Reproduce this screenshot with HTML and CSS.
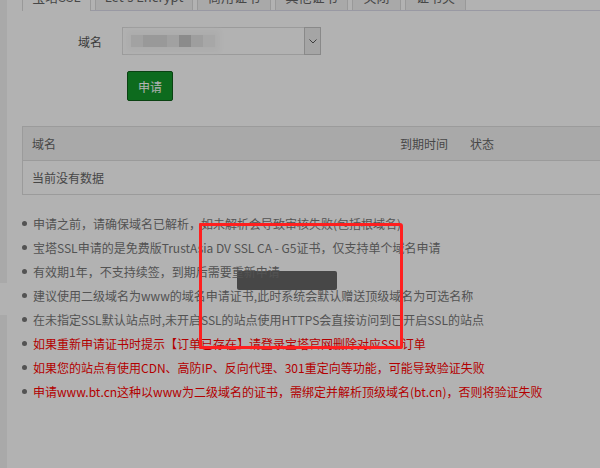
FILE: index.html
```html
<!DOCTYPE html>
<html lang="zh-CN">
<head>
<meta charset="utf-8">
<title>SSL</title>
<link rel="stylesheet" href="styles.css">
</head>
<body>
<div class="app">
  <aside class="rail">
    <div class="rail-top"></div>
    <div class="rail-gap"></div>
    <div class="rail-bottom"></div>
  </aside>
  <main class="panel">
    <nav class="tabs">
      <span class="tab t1 active">宝塔SSL</span>
      <span class="tab t2">Let's Encrypt</span>
      <span class="tab t3">商用证书<i class="badge"></i></span>
      <span class="tab t4">其他证书</span>
      <span class="tab t5">关闭</span>
      <span class="tab t6">证书夹</span>
    </nav>
    <form class="form">
      <div class="row">
        <label class="label">域名</label>
        <div class="select">
          <span class="mosaic">
            <i class="m m1"></i><i class="m m2"></i><i class="m m3"></i><i class="m m4"></i><i class="m m5"></i><i class="m m6"></i>
          </span>
          <span class="arrow"><svg width="8" height="5" viewBox="0 0 8 5"><path d="M0.5 0.5 L4 4 L7.5 0.5" fill="none" stroke="#5a5a5a" stroke-width="1"/></svg></span>
        </div>
      </div>
      <div class="row-btn"><button type="button" class="btn">申请</button></div>
    </form>
    <table class="grid">
      <thead>
        <tr><th class="c1">域名</th><th class="c2">到期时间</th><th class="c3">状态</th></tr>
      </thead>
      <tbody>
        <tr><td colspan="3">当前没有数据</td></tr>
      </tbody>
    </table>
    <div class="tips-wrap">
      <div class="toast"></div>
      <ul class="tips">
        <li>申请之前，请确保域名已解析，如未解析会导致审核失败(包括根域名)</li>
        <li>宝塔SSL申请的是免费版TrustAsia DV SSL CA - G5证书，仅支持单个域名申请</li>
        <li>有效期1年，不支持续签，到期后需要重新申请</li>
        <li>建议使用二级域名为www的域名申请证书,此时系统会默认赠送顶级域名为可选名称</li>
        <li>在未指定SSL默认站点时,未开启SSL的站点使用HTTPS会直接访问到已开启SSL的站点</li>
        <li class="warn">如果重新申请证书时提示【订单已存在】请登录宝塔官网删除对应SSL订单</li>
        <li class="warn">如果您的站点有使用CDN、高防IP、反向代理、301重定向等功能，可能导致验证失败</li>
        <li class="warn">申请www.bt.cn这种以www为二级域名的证书，需绑定并解析顶级域名(bt.cn)，否则将验证失败</li>
      </ul>
    </div>
  </main>
</div>
<div class="shade"></div>
<div class="mark"></div>
</body>
</html>
```

FILE: styles.css
```css
html, body {
  margin: 0;
  padding: 0;
  background: #fff;
  overflow: hidden;
  width: 600px;
  height: 468px;
}
body {
  font-family: "Noto Sans CJK SC", "Microsoft YaHei", sans-serif;
  font-size: 12px;
  color: #666;
}
.app {
  display: flex;
  height: 468px;
}
.rail {
  width: 7px;
  flex: none;
  display: flex;
  flex-direction: column;
}
.rail-top { height: 283px; background: #f3f3f3; }
.rail-gap { height: 32px; background: #fff; }
.rail-bottom { flex: 1; background: #f3f3f3; }

.panel {
  flex: 1;
  padding-left: 15px;
  min-width: 0;
}

/* tabs */
.tabs {
  display: flex;
  margin-top: -18px;
  height: 28px;
  border-bottom: 1px solid #dcdcea;
  gap: 4px;
}
.tab {
  position: relative;
  box-sizing: border-box;
  height: 28px;
  line-height: 28px;
  padding: 0;
  text-align: center;
  border: 1px solid #dcdcdc;
  border-bottom: none;
  background: #f2f2f2;
  color: #666;
  font-size: 13px;
  white-space: nowrap;
}
.t1 { width: 69px; }
.t2 { width: 98px; }
.t3 { width: 74px; }
.t4 { width: 73px; }
.t5 { width: 49px; }
.t6 { width: 61px; }
.tab.active {
  background: #fff;
  height: 29px;
  margin-bottom: -1px;
}
.badge {
  position: absolute;
  right: -4px;
  top: -4px;
  width: 5px;
  height: 11px;
  background: #ff1818;
  border-radius: 50% 50% 50% 50% / 35% 35% 65% 65%;
}

/* form */
.form {
  margin: 16px 0 0;
}
.row {
  display: flex;
  align-items: center;
  height: 28px;
}
.label {
  width: 80px;
  text-align: right;
  margin-right: 20px;
  color: #555;
  font-size: 12px;
}
.select {
  position: relative;
  box-sizing: border-box;
  width: 199px;
  height: 28px;
  border: 1px solid #dedede;
  display: flex;
  align-items: center;
  justify-content: space-between;
  background: #fff;
}
.mosaic {
  display: flex;
  margin-left: 8px;
  height: 12px;
  box-shadow: 0 0 6px 5px #f7f7f7;
  background: #f7f7f7;
}
.m { display: block; width: 12px; height: 12px; }
.m1 { background: #e9e9e9; }
.m2 { background: #dcdcdc; width: 24px; }
.m3 { background: #e7e7e7; }
.m4 { background: #c8c8c8; }
.m5 { background: #e2e2e2; }
.m6 { background: #f0f0f0; }
.arrow {
  box-sizing: border-box;
  width: 17px;
  height: 28px;
  margin: -1px -1px -1px 0;
  border: 1px solid #c4c4c4;
  background: #ececec;
  display: flex;
  align-items: center;
  justify-content: center;
}
.row-btn {
  margin-top: 16px;
  padding-left: 105px;
}
.btn {
  box-sizing: border-box;
  height: 30px;
  padding: 0 10px;
  font-family: inherit;
  font-size: 12px;
  color: #fff;
  background: #149a2c;
  border: 1px solid #0f5f1b;
  border-radius: 2px;
}

/* table */
.grid {
  margin-top: 25px;
  width: 600px;
  border: 1px solid #dfdfdf;
  border-spacing: 0;
  font-size: 12px;
  color: #666;
}
.grid th {
  font-weight: normal;
  text-align: left;
  background: #f3f3f3;
  line-height: 33px;
  padding: 0 9px;
  border-bottom: 1px solid #dfdfdf;
}
.grid .c1 { width: 350px; }
.grid .c2 { width: 52px; }
.grid td {
  line-height: 33px;
  padding: 0 9px;
}

/* tips */
.tips-wrap {
  position: relative;
  margin-top: 16px;
}
.toast {
  position: absolute;
  left: 215px;
  top: 60px;
  width: 100px;
  height: 19px;
  background: #666;
  border-radius: 2px;
}
.tips {
  position: relative;
  list-style: none;
  margin: 0;
  padding: 0;
  color: #777;
}
.tips li {
  display: flex;
  align-items: center;
  height: 24px;
  white-space: nowrap;
}
.tips li::before {
  content: "";
  width: 5px;
  height: 5px;
  border-radius: 50%;
  background: #777;
  margin-right: 6px;
  flex: none;
}
.tips li.warn { color: #ff0000; }

/* modal shade + annotation */
.shade {
  position: fixed;
  inset: 0;
  background: rgba(0, 0, 0, 0.3);
}
.mark {
  position: fixed;
  left: 199px;
  top: 223px;
  width: 204px;
  height: 126px;
  box-sizing: border-box;
  border: 3px solid #ff1f1f;
  border-radius: 1px 3px 2px 1px;
}
```
